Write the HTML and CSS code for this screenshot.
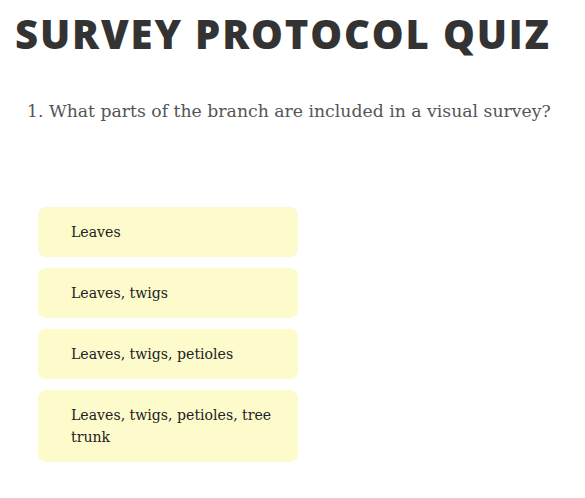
FILE: index.html
```html
<!DOCTYPE html>
<html lang="en">
<head>
<meta charset="utf-8">
<title>Survey Protocol Quiz</title>
<link rel="stylesheet" href="styles.css">
</head>
<body>
<main class="quiz">
  <h1 class="quiz-title">SURVEY PROTOCOL QUIZ</h1>
  <p class="question">1. What parts of the branch are included in a visual survey?</p>
  <div class="answers">
    <div class="answer">Leaves</div>
    <div class="answer">Leaves, twigs</div>
    <div class="answer">Leaves, twigs, petioles</div>
    <div class="answer">Leaves, twigs, petioles, tree trunk</div>
  </div>
</main>
</body>
</html>
```
FILE: styles.css
```css
html, body {
  margin: 0;
  padding: 0;
  background: #ffffff;
}
.quiz {
  padding: 0 0 0 15px;
}
.quiz-title {
  margin: 0;
  padding-top: 10px;
  font-family: "Open Sans", "DejaVu Sans", sans-serif;
  font-weight: 800;
  font-size: 40px;
  line-height: 48px;
  color: #333333;
  letter-spacing: 1.85px;
}
.question {
  margin: 41px 0 0 12px;
  font-family: "DejaVu Serif", serif;
  font-size: 17.25px;
  line-height: 24px;
  color: #555555;
}
.answers {
  margin: 84px 0 0 23px;
  display: flex;
  flex-direction: column;
  gap: 11px;
  width: 260px;
}
.answer {
  background: #fdfbcc;
  border-radius: 8px;
  padding: 14px 20px 14px 33px;
  font-family: "DejaVu Serif", serif;
  font-size: 14.1px;
  line-height: 22px;
  color: #222222;
}
```
